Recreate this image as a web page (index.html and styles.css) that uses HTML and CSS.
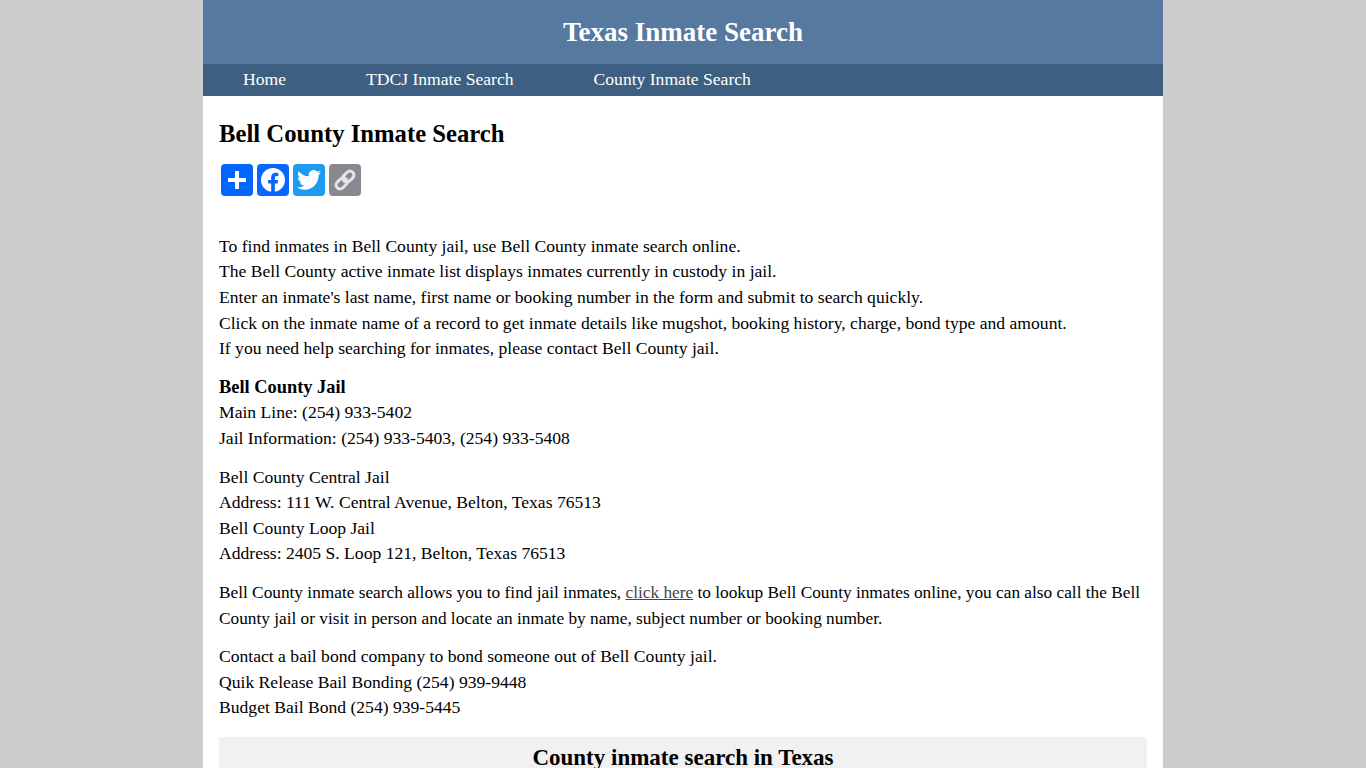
FILE: index.html
```html
<!DOCTYPE html>
<html lang="en">
<head>
<meta charset="utf-8">
<title>Bell County Inmate Search</title>
<link rel="stylesheet" href="styles.css">
</head>
<body>
<div class="page">
  <header class="site-header"><div class="site-title">Texas Inmate Search</div></header>
  <nav class="site-nav">
    <a href="#">Home</a>
    <a href="#">TDCJ Inmate Search</a>
    <a href="#">County Inmate Search</a>
  </nav>
  <main class="content">
    <h1>Bell County Inmate Search</h1>
    <div class="share">
      <a class="share-btn add" href="#" aria-label="Share">
        <svg viewBox="0 0 32 32"><path fill="#fff" d="M14 7h4v7h7v4h-7v7h-4v-7H7v-4h7z"/></svg>
      </a>
      <a class="share-btn fb" href="#" aria-label="Facebook">
        <svg viewBox="0 0 32 32"><path fill="#fff" d="M28 16c0-6.627-5.373-12-12-12S4 9.373 4 16c0 5.99 4.388 10.954 10.125 11.854V19.47H11.08V16h3.046v-2.644c0-3.007 1.792-4.668 4.533-4.668 1.312 0 2.686.234 2.686.234v2.953H19.83c-1.491 0-1.956.925-1.956 1.874V16h3.328l-.532 3.469h-2.796v8.385C23.612 26.954 28 21.99 28 16z"/></svg>
      </a>
      <a class="share-btn tw" href="#" aria-label="Twitter">
        <svg viewBox="0 0 32 32"><path fill="#fff" d="M28 8.557a9.913 9.913 0 0 1-2.828.775 4.93 4.93 0 0 0 2.166-2.724 9.864 9.864 0 0 1-3.13 1.194 4.924 4.924 0 0 0-8.39 4.49A13.98 13.98 0 0 1 5.67 7.15a4.92 4.92 0 0 0 1.524 6.573 4.9 4.9 0 0 1-2.23-.616v.062a4.926 4.926 0 0 0 3.95 4.827 4.96 4.96 0 0 1-2.224.084 4.93 4.93 0 0 0 4.6 3.42A9.88 9.88 0 0 1 4 23.54a13.94 13.94 0 0 0 7.548 2.212c9.057 0 14.01-7.502 14.01-14.008 0-.213-.005-.425-.015-.636A10.01 10.01 0 0 0 28 8.557z"/></svg>
      </a>
      <a class="share-btn link" href="#" aria-label="Copy link">
        <svg viewBox="0 0 32 32"><g fill="none" stroke="#e4e4e8" stroke-width="3" transform="rotate(-45 16 16)"><rect x="5" y="12" width="12.5" height="8" rx="4"/><rect x="14.5" y="12" width="12.5" height="8" rx="4"/></g></svg>
      </a>
    </div>
    <p>To find inmates in Bell County jail, use Bell County inmate search online.<br>
    The Bell County active inmate list displays inmates currently in custody in jail.<br>
    Enter an inmate's last name, first name or booking number in the form and submit to search quickly.<br>
    Click on the inmate name of a record to get inmate details like mugshot, booking history, charge, bond type and amount.<br>
    If you need help searching for inmates, please contact Bell County jail.</p>
    <p><strong>Bell County Jail</strong><br>
    Main Line: (254) 933-5402<br>
    Jail Information: (254) 933-5403, (254) 933-5408</p>
    <p>Bell County Central Jail<br>
    Address: 111 W. Central Avenue, Belton, Texas 76513<br>
    Bell County Loop Jail<br>
    Address: 2405 S. Loop 121, Belton, Texas 76513</p>
    <p class="wrapped">Bell County inmate search allows you to find jail inmates, <a class="inline" href="#">click here</a> to lookup Bell County inmates online, you can also call the Bell County jail or visit in person and locate an inmate by name, subject number or booking number.</p>
    <p>Contact a bail bond company to bond someone out of Bell County jail.<br>
    Quik Release Bail Bonding (254) 939-9448<br>
    Budget Bail Bond (254) 939-5445</p>
    <section class="related"><h2>County inmate search in Texas</h2></section>
  </main>
</div>
</body>
</html>
```
FILE: styles.css
```css
* { box-sizing: border-box; }
html, body { margin: 0; padding: 0; }
body {
  background: #ccc;
  color: #000;
  font-family: "Liberation Serif", Georgia, serif;
  font-size: 17.6px;
  line-height: 25.6px;
}
.page { width: 960px; margin: 0 auto; background: #fff; }
.site-header { height: 64px; padding-top: 2px; background: #55799f; display: flex; align-items: center; justify-content: center; }
.site-title { color: #fff; font-size: 27px; font-weight: 700; }
.site-nav { height: 32px; background: #3d5f82; display: flex; align-items: center; padding-left: 40px; gap: 80px; }
.site-nav a { color: #fff; text-decoration: none; }
.content { padding: 22px 16px 16px; }
h1 { margin: 0; font-size: 24.7px; line-height: 32px; font-weight: 700; }
.share { display: flex; gap: 4px; padding: 14px 2px 0; height: 83.9px; }
.share-btn { display: block; width: 32px; height: 32px; border-radius: 4px; }
.share-btn svg { display: block; width: 32px; height: 32px; }
.add { background: #0166ff; }
.fb { background: #0866ff; }
.tw { background: #1d9bf0; }
.link { background: #888990; }
p { margin: 0 0 13px; }
strong { font-size: 18.4px; }
.wrapped { font-size: 17.3px; }
.inline { color: #444; }
.related { background: #f1f1f1; margin-top: 16.3px; padding: 8px 16px; }
h2 { margin: 0; font-size: 23px; line-height: 26px; text-align: center; }
```
